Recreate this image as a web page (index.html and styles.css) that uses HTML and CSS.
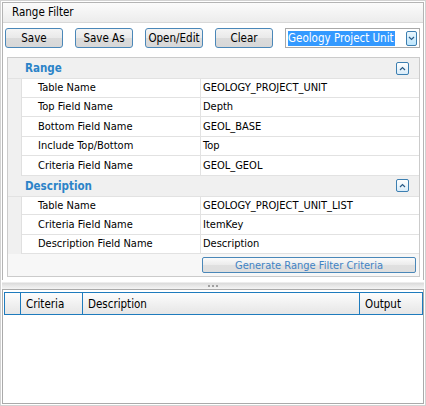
FILE: index.html
```html
<!DOCTYPE html>
<html>
<head>
<meta charset="utf-8">
<link rel="stylesheet" href="styles.css">
</head>
<body>
<div class="window">
  <div class="upper">
    <div class="titlebar">Range Filter</div>
    <div class="toolbar">
      <button class="btn">Save</button>
      <button class="btn">Save As</button>
      <button class="btn">Open/Edit</button>
      <button class="btn">Clear</button>
      <div class="combo">
        <span class="combo-text">Geology Project Unit</span>
        <span class="combo-btn"><svg width="7" height="5" viewBox="0 0 7 5"><path d="M1 1 L3.5 3.5 L6 1" fill="none" stroke="#2a5b86" stroke-width="1.2"/></svg></span>
      </div>
    </div>
    <div class="pg">
      <div class="cat">
        <span class="cat-title">Range</span>
        <span class="collapse"><svg width="7" height="5" viewBox="0 0 7 5"><path d="M1 4 L3.5 1.5 L6 4" fill="none" stroke="#2a5b86" stroke-width="1.2"/></svg></span>
      </div>
      <div class="row"><span class="gut"></span><span class="lbl">Table Name</span><span class="val">GEOLOGY_PROJECT_UNIT</span></div>
      <div class="row"><span class="gut"></span><span class="lbl">Top Field Name</span><span class="val">Depth</span></div>
      <div class="row"><span class="gut"></span><span class="lbl">Bottom Field Name</span><span class="val">GEOL_BASE</span></div>
      <div class="row"><span class="gut"></span><span class="lbl">Include Top/Bottom</span><span class="val">Top</span></div>
      <div class="row"><span class="gut"></span><span class="lbl">Criteria Field Name</span><span class="val">GEOL_GEOL</span></div>
      <div class="cat">
        <span class="cat-title">Description</span>
        <span class="collapse"><svg width="7" height="5" viewBox="0 0 7 5"><path d="M1 4 L3.5 1.5 L6 4" fill="none" stroke="#2a5b86" stroke-width="1.2"/></svg></span>
      </div>
      <div class="row"><span class="gut"></span><span class="lbl">Table Name</span><span class="val">GEOLOGY_PROJECT_UNIT_LIST</span></div>
      <div class="row"><span class="gut"></span><span class="lbl">Criteria Field Name</span><span class="val">ItemKey</span></div>
      <div class="row"><span class="gut"></span><span class="lbl">Description Field Name</span><span class="val">Description</span></div>
      <div class="cmdrow"><button class="cmd">Generate Range Filter Criteria</button></div>
    </div>
  </div>
  <div class="splitter"><span class="grip"><i></i><i></i><i></i></span></div>
  <div class="lower">
    <div class="ghead">
      <span class="gc c0"></span>
      <span class="gc c1">Criteria</span>
      <span class="gc c2">Description</span>
      <span class="gc c3">Output</span>
    </div>
  </div>
</div>
</body>
</html>
```
FILE: styles.css
```css
html, body {
  margin: 0;
  padding: 0;
  background: #ffffff;
}
body {
  font-family: "DejaVu Sans Condensed", "DejaVu Sans", sans-serif;
  font-stretch: condensed;
  font-size: 11px;
  color: #000;
}
.window {
  width: 426px;
  height: 406px;
  box-sizing: border-box;
  border: 1px solid #d2d2d2;
  padding: 1px;
  display: flex;
  flex-direction: column;
  background: #fff;
}
.upper {
  border: 1px solid #b4b4b4;
  border-bottom: none;
  display: flex;
  flex-direction: column;
}
.titlebar {
  height: 19px;
  line-height: 18px;
  padding-left: 9px;
  font-size: 11.5px;
  background: linear-gradient(#fbfbfb, #ececec);
  border-bottom: 1px solid #d8d8d8;
}
.toolbar {
  display: flex;
  align-items: center;
  gap: 12px;
  padding: 5px 2px 9px 2px;
}
.btn {
  width: 58px;
  height: 20px;
  box-sizing: border-box;
  margin: 0;
  padding: 0;
  font-family: inherit;
  font-stretch: condensed;
  font-size: 11.5px;
  color: #000;
  border: 1px solid #4a87b8;
  border-radius: 3px;
  background: linear-gradient(#f4f4f4, #e9e9e9 50%, #dcdcdc 51%, #d7d7d7);
}
.combo {
  width: 135px;
  height: 20px;
  box-sizing: border-box;
  border: 1px solid #a9a9a9;
  display: flex;
  align-items: center;
  padding: 0 2px;
  background: #fff;
}
.combo-text {
  background: #3399ff;
  color: #fff;
  font-size: 11.5px;
  line-height: 15px;
  padding: 0 1px 0 0;
}
.combo-btn {
  margin-left: auto;
  width: 11px;
  height: 15px;
  box-sizing: border-box;
  border: 1px solid #3c7fb1;
  border-radius: 2px;
  background: linear-gradient(#eaf6fd, #bee6fd);
  display: flex;
  align-items: center;
  justify-content: center;
}
.pg {
  margin: 0 3px 3px 4px;
  border: 1px solid #cbcbcb;
  display: flex;
  flex-direction: column;
}
.cat {
  height: 20px;
  box-sizing: border-box;
  background: #f0f0f0;
  display: flex;
  align-items: center;
  padding-left: 17px;
  padding-right: 10px;
}
.cat-title {
  font-weight: bold;
  color: #2b83c8;
  font-size: 11.5px;
}
.collapse {
  margin-left: auto;
  width: 13px;
  height: 13px;
  box-sizing: border-box;
  border: 1px solid #3c7fb1;
  border-radius: 2px;
  background: linear-gradient(#ffffff, #d9ecf9);
  display: flex;
  align-items: center;
  justify-content: center;
}
.row {
  height: 19.5px;
  box-sizing: border-box;
  display: flex;
  align-items: stretch;
  border-bottom: 1px solid #e2e2e2;
  background: #fff;
}
.row:nth-of-type(2), .row:nth-of-type(8) {
  border-top: 1px solid #e2e2e2;
}
.gut {
  width: 13px;
  background: #f0f0f0;
  border-right: 1px solid #e0e0e0;
  margin-bottom: -1px;
}
.lbl {
  width: 162px;
  padding-left: 16px;
  border-right: 1px solid #e2e2e2;
  display: flex;
  align-items: center;
}
.val {
  flex: 1;
  padding-left: 2px;
  display: flex;
  align-items: center;
}
.cmdrow {
  height: 22px;
  box-sizing: border-box;
  background: #f7f7f7;
  display: flex;
  align-items: center;
  padding-left: 194px;
  padding-right: 3px;
}
.cmd {
  flex: 1;
  height: 16px;
  box-sizing: border-box;
  margin: 0;
  padding: 0;
  font-family: inherit;
  font-stretch: condensed;
  font-size: 11px;
  color: #3f83c4;
  border: 1px solid #4a87b8;
  border-radius: 2px;
  background: linear-gradient(#fbfbfb, #ebebeb 50%, #e0e0e0 51%, #dedede);
}
.splitter {
  height: 9px;
  background: linear-gradient(#ffffff 0, #ffffff 2px, #dadada 3px, #e9e9e9 6px, #f4f4f4 9px);
  display: flex;
  justify-content: center;
  align-items: flex-end;
  padding-bottom: 1px;
  box-sizing: border-box;
}
.grip {
  display: flex;
  gap: 2px;
  margin-bottom: 1px;
}
.grip i {
  width: 2px;
  height: 2px;
  background: #a0a0a0;
}
.lower {
  flex: 1;
  border: 1px solid #aaaaaa;
  padding: 2px 0 0 1px;
  background: #fff;
}
.ghead {
  height: 23px;
  box-sizing: border-box;
  border: 1px solid #1e7bbd;
  display: flex;
  background: linear-gradient(#fdfdfd, #f1f1f1 50%, #e6e6e6);
}
.gc {
  display: flex;
  align-items: center;
  padding-left: 5px;
  box-sizing: border-box;
  border-right: 1px solid #1e7bbd;
  font-size: 11.5px;
}
.c0 { width: 16px; padding: 0; }
.c1 { width: 62px; }
.c2 { width: 277px; }
.c3 { flex: 1; border-right: none; }
```
